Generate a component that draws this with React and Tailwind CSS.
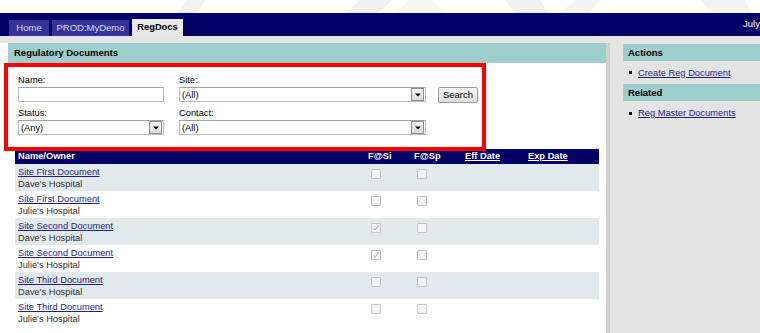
import React from "react";

function Arrow() {
  return (
    <div className="w-[13px] h-[13px] border border-[#8e8e8e] bg-gradient-to-b from-[#f7f7f7] to-[#d9d9d9] flex items-center justify-center">
      <svg width="6" height="4" viewBox="0 0 6 4">
        <path d="M0 0.5 L6 0.5 L3 3.5 Z" fill="#000" />
      </svg>
    </div>
  );
}

function Select({ width, value }) {
  return (
    <div
      className={`${width} h-[15px] border border-[#bdbdbd] border-t-[#a3a3a3] bg-white flex items-center justify-between pl-[2px] pr-[1px]`}
    >
      <span className="text-[9.3px] leading-[12px] text-black">{value}</span>
      <Arrow />
    </div>
  );
}

function Check({ checked }) {
  return (
    <div className="w-[10px] h-[10px] border border-[#c4c4c4] bg-[#f4f4f4] rounded-[1px] flex items-center justify-center">
      {checked && (
        <svg width="8" height="8" viewBox="0 0 8 8">
          <path d="M1.5 4.2 L3.2 6 L6.5 1.5" stroke="#a9a9a9" strokeWidth="1" fill="none" />
        </svg>
      )}
    </div>
  );
}

const rows = [
  { doc: "Site First Document", owner: "Dave's Hospital", si: false },
  { doc: "Site First Document", owner: "Julie's Hospital", si: false },
  { doc: "Site Second Document", owner: "Dave's Hospital", si: true },
  { doc: "Site Second Document", owner: "Julie's Hospital", si: true },
  { doc: "Site Third Document", owner: "Dave's Hospital", si: false },
  { doc: "Site Third Document", owner: "Julie's Hospital", si: false },
];

export default function App() {
  return (
    <div className="relative w-[760px] h-[333px] overflow-hidden bg-white font-['Liberation_Sans',Arial,sans-serif] text-black">
      {/* top strip with faint watermark */}
      <div className="relative h-[13px] bg-white">
        <svg className="absolute left-0 top-0" width="760" height="13" viewBox="0 0 760 13">
          <polygon points="176,13 196,13 206,0 188,0" fill="#f3f3f3" />
          <polygon points="345,13 378,13 392,0 360,0" fill="#f1f1f1" />
          <polygon points="395,13 445,13 432,0 410,0" fill="#f6f6f6" />
          <polygon points="505,0 540,0 548,13 515,13" fill="#f1f1f1" />
          <polygon points="560,13 590,13 600,0 575,0" fill="#f4f4f4" />
          <polygon points="700,0 745,0 752,13 712,13" fill="#f4f4f4" />
        </svg>
      </div>

      {/* nav bar */}
      <div className="h-[23px] bg-[#000066] flex items-end pl-[9px] relative">
        <div className="flex gap-[3px] items-end">
          <div className="w-[40px] h-[16px] bg-[#333399] text-[#dcdcf4] text-[9.5px] leading-[16px] text-center">Home</div>
          <div className="w-[77px] h-[16px] bg-[#333399] text-[#dcdcf4] text-[9.5px] leading-[16px] text-center">PROD:MyDemo</div>
          <div className="w-[51px] h-[17px] bg-[#e8e8e8] text-black text-[9.3px] font-bold leading-[17px] text-center">RegDocs</div>
        </div>
        <div className="absolute left-[743px] top-[5px] text-white text-[9.5px] leading-[12px] whitespace-nowrap">July</div>
      </div>

      {/* gray band */}
      <div className="h-[7px] bg-[#e5e5e5]" />

      {/* body */}
      <div className="flex h-[290px]">
        <div className="w-[8px] bg-white" />
        {/* main panel */}
        <div className="w-[598px] bg-white flex flex-col">
          <div className="h-[20px] bg-[#9dcdcd] pl-[6px] text-[9.5px] font-bold leading-[20px]">Regulatory Documents</div>

          {/* form */}
          <div className="pt-[11px] pl-[10px] flex items-start">
            <div className="w-[161px] flex flex-col">
              <div className="text-[9.3px] leading-[12px] mb-[1px]">Name:</div>
              <div className="w-[146px] h-[15px] border border-[#bdbdbd] border-t-[#a3a3a3] bg-white" />
              <div className="text-[9.3px] leading-[12px] mt-[5px] mb-[1px]">Status:</div>
              <Select width="w-[146px]" value="(Any)" />
            </div>
            <div className="w-[259px] flex flex-col">
              <div className="text-[9.3px] leading-[12px] mb-[1px]">Site:</div>
              <Select width="w-[247px]" value="(All)" />
              <div className="text-[9.3px] leading-[12px] mt-[5px] mb-[1px]">Contact:</div>
              <Select width="w-[247px]" value="(All)" />
            </div>
            <div className="pt-[13px]">
              <div className="w-[40px] h-[16px] border border-[#9a9a9a] rounded-[2px] bg-gradient-to-b from-[#fafafa] to-[#dedede] text-[9.5px] leading-[14px] text-center">Search</div>
            </div>
          </div>

          {/* table */}
          <div className="mt-[14px] ml-[7px] w-[584px]">
            <div className="h-[15px] bg-[#000066] grid grid-cols-[353px_46px_51px_63px_71px] text-white text-[9.3px] font-bold leading-[15px]">
              <div className="pl-[3px]">Name/Owner</div>
              <div>F@Si</div>
              <div>F@Sp</div>
              <div className="underline">Eff Date</div>
              <div className="underline">Exp Date</div>
            </div>
            {rows.map((r, i) => (
              <div
                key={i}
                className={`h-[27px] grid grid-cols-[353px_46px_51px_63px_71px] ${i % 2 === 0 ? "bg-[#e2e9ea]" : "bg-white"}`}
              >
                <div className="pl-[3px] pt-[2px] text-[9.3px] leading-[12px]">
                  <div className="text-[#1f1f8f] underline">{r.doc}</div>
                  <div className="text-[#333333]">{r.owner}</div>
                </div>
                <div className="pl-[3px] pt-[5px]">
                  <Check checked={r.si} />
                </div>
                <div className="pl-[3px] pt-[5px]">
                  <Check checked={false} />
                </div>
                <div />
                <div />
              </div>
            ))}
          </div>
        </div>
        {/* shadow divider */}
        <div className="w-[4px] bg-gradient-to-r from-[#d6d6d6] to-[#c9c9c9]" />
        {/* sidebar */}
        <div className="flex-1 bg-[#e4e4e4] pl-[13px] pt-[1px]">
          <div className="h-[17px] bg-[#9dcdcd] pl-[5px] text-[9.5px] font-bold leading-[17px]">Actions</div>
          <div className="h-[23px] flex items-center pl-[6px]">
            <div className="w-[3px] h-[3px] bg-black mr-[6px]" />
            <span className="text-[9.3px] leading-[12px] text-[#1f1f8f] underline whitespace-nowrap">Create Reg Document</span>
          </div>
          <div className="h-[17px] bg-[#9dcdcd] pl-[5px] text-[9.5px] font-bold leading-[17px]">Related</div>
          <div className="h-[24px] flex items-center pl-[6px]">
            <div className="w-[3px] h-[3px] bg-black mr-[6px]" />
            <span className="text-[9.3px] leading-[12px] text-[#1f1f8f] underline whitespace-nowrap">Reg Master Documents</span>
          </div>
        </div>
      </div>

      {/* red annotation box */}
      <div className="absolute left-[4px] top-[63px] w-[482px] h-[88px] border-[4px] border-[#ff0000] pointer-events-none" />
    </div>
  );
}
